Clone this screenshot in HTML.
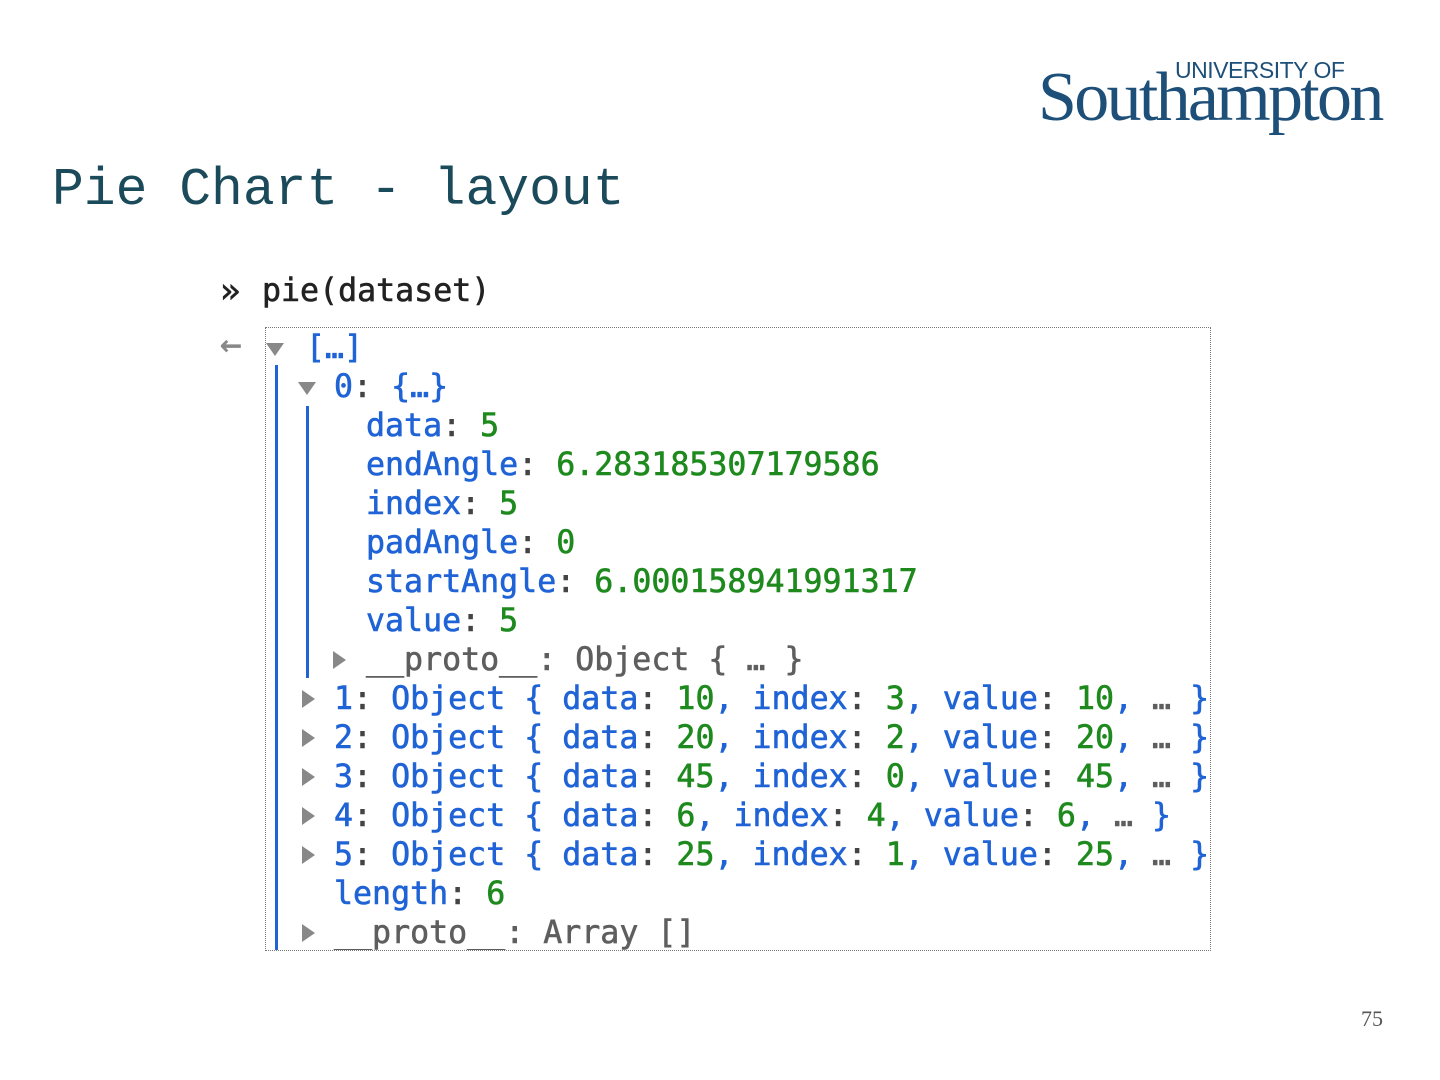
<!DOCTYPE html>
<html><head><meta charset="utf-8"><style>
body{margin:0;width:1440px;height:1080px;background:#fff;position:relative;overflow:hidden;font-family:"Liberation Sans",sans-serif}
.title{position:absolute;left:52px;top:158px;font-family:"Liberation Mono",monospace;font-size:53px;color:#1b4a5a;line-height:64px;white-space:pre}
.logo1{position:absolute;left:1175px;top:57px;font-family:"Liberation Sans",sans-serif;font-size:23px;color:#1d4f78;letter-spacing:-0.5px}
.logo2{position:absolute;left:1038px;top:58px;font-family:"Liberation Serif",serif;font-size:70px;color:#1d4f78;letter-spacing:-2.7px}
.pg{position:absolute;left:1361px;top:1006px;font-family:"Liberation Serif",serif;font-size:22px;color:#555}
.mono{font-family:"DejaVu Sans Mono","Liberation Mono",monospace;font-size:31.6px;white-space:pre;line-height:39px;position:absolute;-webkit-text-stroke:0.6px currentColor}
.box{position:absolute;left:265px;top:327px;width:944px;height:622px;border:1.5px dotted #777;overflow:hidden}
.k{color:#1f63d6}.n{color:#1e8a1e}.c{color:#444}.g{color:#5e5e5e}
.tri{position:absolute;width:0;height:0}
.tr{border-left:13px solid #888;border-top:9px solid transparent;border-bottom:9px solid transparent}
.td{border-top:13px solid #888;border-left:9px solid transparent;border-right:9px solid transparent}
.vl{position:absolute;width:3px;background:#1f63d6}
</style></head><body>
<div class="logo1">UNIVERSITY OF</div>
<div class="logo2">Southampton</div>
<div class="title">Pie Chart - layout</div>
<div class="mono" style="left:220px;top:272px;color:#222;font-size:34px">&raquo;</div>
<div class="mono" style="left:262px;top:272px;color:#222">pie(dataset)</div>
<div class="mono" style="left:220px;top:325px;color:#888;font-size:36px">&larr;</div>
<div class="box">
<div class="vl" style="left:9px;top:37px;height:590px"></div>
<div class="vl" style="left:40px;top:78px;height:272px"></div>
<div class="tri td" style="left:0px;top:15px"></div>
<div class="mono k" style="left:40px;top:1px">[…]</div>
<div class="tri td" style="left:32px;top:54px"></div>
<div class="mono" style="left:68px;top:40px"><span class="k">0</span><span class="c">:</span> <span class="k">{…}</span></div>
<div class="mono" style="left:100px;top:79px"><span class="k">data</span><span class="c">:</span> <span class="n">5</span></div>
<div class="mono" style="left:100px;top:118px"><span class="k">endAngle</span><span class="c">:</span> <span class="n">6.283185307179586</span></div>
<div class="mono" style="left:100px;top:157px"><span class="k">index</span><span class="c">:</span> <span class="n">5</span></div>
<div class="mono" style="left:100px;top:196px"><span class="k">padAngle</span><span class="c">:</span> <span class="n">0</span></div>
<div class="mono" style="left:100px;top:235px"><span class="k">startAngle</span><span class="c">:</span> <span class="n">6.000158941991317</span></div>
<div class="mono" style="left:100px;top:274px"><span class="k">value</span><span class="c">:</span> <span class="n">5</span></div>
<div class="tri tr" style="left:67px;top:323px"></div>
<div class="mono g" style="left:100px;top:313px">__proto__: Object { … }</div>
<div class="tri tr" style="left:36px;top:362px"></div>
<div class="mono k" style="left:68px;top:352px">1<span class="c">:</span> Object { data<span class="c">:</span> <span class="n">10</span>, index<span class="c">:</span> <span class="n">3</span>, value<span class="c">:</span> <span class="n">10</span>, <span class="g">…</span> }</div>
<div class="tri tr" style="left:36px;top:401px"></div>
<div class="mono k" style="left:68px;top:391px">2<span class="c">:</span> Object { data<span class="c">:</span> <span class="n">20</span>, index<span class="c">:</span> <span class="n">2</span>, value<span class="c">:</span> <span class="n">20</span>, <span class="g">…</span> }</div>
<div class="tri tr" style="left:36px;top:440px"></div>
<div class="mono k" style="left:68px;top:430px">3<span class="c">:</span> Object { data<span class="c">:</span> <span class="n">45</span>, index<span class="c">:</span> <span class="n">0</span>, value<span class="c">:</span> <span class="n">45</span>, <span class="g">…</span> }</div>
<div class="tri tr" style="left:36px;top:479px"></div>
<div class="mono k" style="left:68px;top:469px">4<span class="c">:</span> Object { data<span class="c">:</span> <span class="n">6</span>, index<span class="c">:</span> <span class="n">4</span>, value<span class="c">:</span> <span class="n">6</span>, <span class="g">…</span> }</div>
<div class="tri tr" style="left:36px;top:518px"></div>
<div class="mono k" style="left:68px;top:508px">5<span class="c">:</span> Object { data<span class="c">:</span> <span class="n">25</span>, index<span class="c">:</span> <span class="n">1</span>, value<span class="c">:</span> <span class="n">25</span>, <span class="g">…</span> }</div>
<div class="mono" style="left:68px;top:547px"><span class="k">length</span><span class="c">:</span> <span class="n">6</span></div>
<div class="tri tr" style="left:36px;top:596px"></div>
<div class="mono g" style="left:68px;top:586px">__proto__: Array []</div>
</div>
<div class="pg">75</div>
</body></html>
